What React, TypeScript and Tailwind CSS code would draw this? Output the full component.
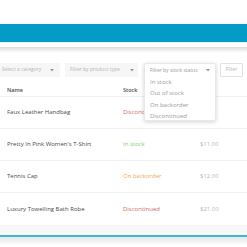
import React from "react";

const rows = [
  { name: "Faux Leather Handbag", stock: "Discontinued", color: "text-[#d16a6a]", price: "" },
  { name: "Pretty In Pink Women's T-Shirt", stock: "In stock", color: "text-[#7ccf6e]", price: "$11.00" },
  { name: "Tennis Cap", stock: "On backorder", color: "text-[#f2a94a]", price: "$12.00" },
  { name: "Luxury Towelling Bath Robe", stock: "Discontinued", color: "text-[#d16a6a]", price: "$21.00" },
];

function Caret() {
  return (
    <svg width="4" height="3" viewBox="0 0 4 3" className="shrink-0">
      <path d="M0 0 L4 0 L2 2.5 Z" fill="#999" />
    </svg>
  );
}

export default function App() {
  return (
    <div
      className="relative w-[247px] h-[247px] overflow-hidden bg-white"
      style={{ fontFamily: '"Open Sans", "Noto Sans", sans-serif' }}
    >
      <div className="h-[24px]" />
      <div className="h-[18px] bg-[#049cc6]" />
      <div className="h-[1px] bg-[#e3f3f8]" />
      <div className="h-[4px]" />
      <div className="h-[6px] bg-linear-to-b from-[#dcdcdc] to-white" />
      <div className="h-[10px]" />
      {/* filters */}
      <div className="flex items-center h-[14px] text-[5px] text-[#b5b5b5]">
        <div className="w-[60px] h-full bg-[#f6f6f6] flex items-center justify-between pl-[2px] pr-[6px]">
          <span>Select a category</span>
          <Caret />
        </div>
        <div className="ml-[5px] w-[73px] h-full bg-[#f6f6f6] flex items-center justify-between pl-[5px] pr-[4px]">
          <span>Filter by product type</span>
          <Caret />
        </div>
        <div className="ml-[6px] w-[72px] h-full" />
        <div className="ml-[4px] w-[23px] h-full border border-[#e2e2e2] rounded-[1px] flex items-center justify-center">
          Filter
        </div>
      </div>
      {/* header */}
      <div className="h-[7px]" />
      <div className="flex items-center h-[13px] text-[5.5px] font-semibold text-[#4a4a4a] border-b border-[#f0f0f0]">
        <div className="w-[123px] pl-[7px]">Name</div>
        <div className="w-[77px]">Stock</div>
      </div>
      {rows.map((r, i) => (
        <div
          key={i}
          className={`flex items-center h-[32px] text-[6px] ${i < 3 ? "border-b border-[#f0f0f0]" : ""}`}
        >
          <div className="w-[123px] pl-[7px] text-[#4a4a4a]">{r.name}</div>
          <div className={`${i === 0 ? "w-[21px] overflow-hidden whitespace-nowrap" : "w-[77px]"} ${r.color}`}>
            {r.stock}
          </div>
          {r.price && <div className="text-[#b8b8b8]">{r.price}</div>}
        </div>
      ))}
      <div className="h-[10px] bg-[#f7f7f7]" />
      <div className="h-[2px] bg-[#3cb6da]" />
      <div className="h-[8px] bg-linear-to-b from-[#e6e6e6] to-white" />

      {/* open dropdown */}
      <div className="absolute left-[144px] top-[63px] w-[72px] h-[58px] bg-white rounded-[2px] shadow-[0_1px_4px_rgba(0,0,0,0.18)] border border-[#e8e8e8]">
        <div className="h-[13px] flex items-center justify-between pl-[5px] pr-[5px] text-[5px] text-[#999]">
          <span>Filter by stock status</span>
          <Caret />
        </div>
        <div className="text-[6px] text-[#9a9a9a] pl-[5px] flex flex-col">
          <div className="h-[11.3px] flex items-center">In stock</div>
          <div className="h-[11.3px] flex items-center">Out of stock</div>
          <div className="h-[11.3px] flex items-center">On backorder</div>
          <div className="h-[11.3px] flex items-center">Discontinued</div>
        </div>
      </div>
    </div>
  );
}
